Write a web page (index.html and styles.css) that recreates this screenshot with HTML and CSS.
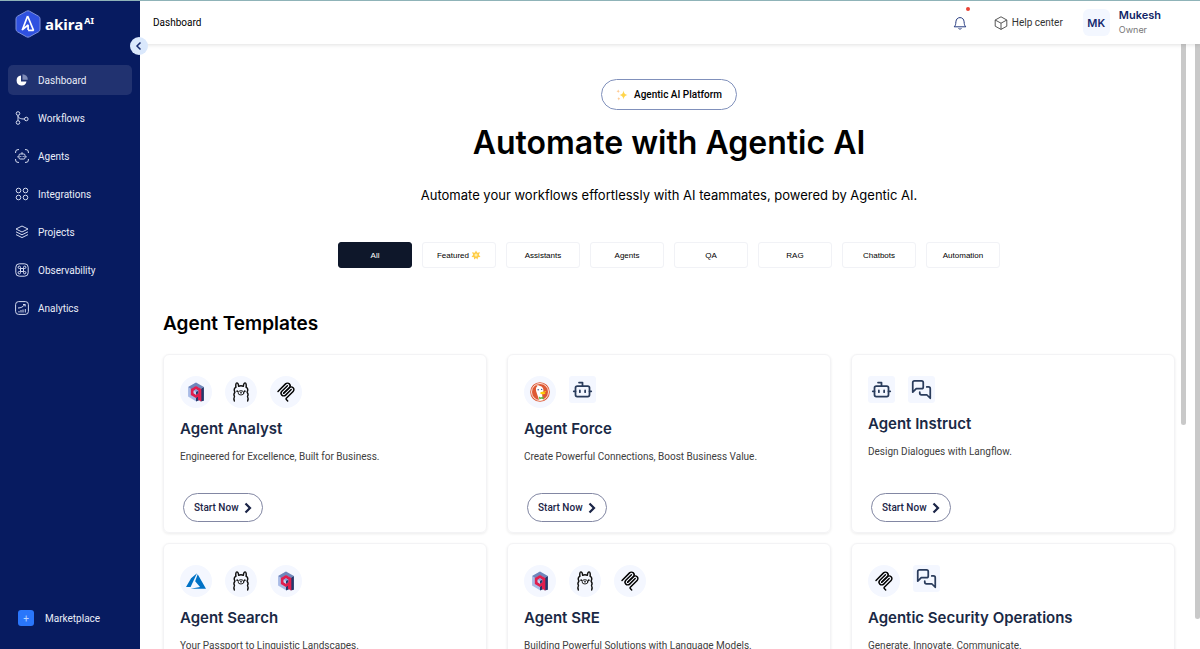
FILE: index.html
```html
<!DOCTYPE html>
<html lang="en">
<head>
<meta charset="utf-8">
<title>Akira AI – Dashboard</title>
<link rel="stylesheet" href="styles.css">
</head>
<body>
<svg class="sprite" aria-hidden="true">
  <symbol id="qdrant" viewBox="0 0 24 24">
    <path fill="#a9bbe6" d="M12 1 2.500 6.500v11L12 23l3-1.700V12z"/>
    <path fill="#6f86bb" d="M12 .500 2.500 6l4 2.400L12 5.200l5.500 3.200L21.500 6z"/>
    <path fill="#24386c" d="M21.500 6v16.500l-4 1V8.400zM12 18.500l4.500-2.500v5.500L12 23.500z"/>
    <path fill="#e01e4e" fill-rule="evenodd" d="M12 4.800 18.400 8.500V23.300l-4-2V17.800L12 19.200 5.800 15.600V8.400zM12 8.800 9.200 10.400v3.200L12 15.200l2.800-1.600v-3.200z"/>
    <path fill="#8aa2da" d="m12 8.800 2.800 1.600L12 12 9.200 10.400z"/>
    <path fill="#c5d2f2" d="M9.200 10.400v3.200L12 15.200V12z"/>
    <path fill="#24386c" d="M14.800 10.400v3.200L12 15.200V12z"/>
  </symbol>
  <symbol id="llama" viewBox="0 0 24 24">
    <g fill="none" stroke="#111" stroke-width="1.700" stroke-linecap="round" stroke-linejoin="round">
      <path d="M5.800 6.200C5.500 3.800 5.900 1 7 1s2 1.800 2.200 4.200M18.200 6.200C18.500 3.800 18.100 1 17 1s-2 1.800-2.200 4.200M9.200 5.200c1.700-.900 3.900-.900 5.600 0"/>
      <path d="M5.800 6.200C3.900 7.500 3.500 10 4.700 12.200c-1.400 1.500-1.500 3.400-.500 5.200-.900 1.600-.900 3.500-.200 5.400M18.200 6.200c1.900 1.300 2.300 3.800 1.100 6 1.400 1.500 1.500 3.400.500 5.200.900 1.600.900 3.500.200 5.400"/>
      <ellipse cx="12" cy="13" rx="3.500" ry="2.600" stroke-width="1.100"/>
      <path stroke-width="1" d="M11.300 12.300 12 12.800l.700-.500M12 12.800v.900"/>
    </g>
    <circle cx="7.400" cy="11" r="1"/><circle cx="16.600" cy="11" r="1"/>
  </symbol>
  <symbol id="mcp" viewBox="0 0 180 180">
    <g fill="none" stroke="#000" stroke-width="13" stroke-linecap="round">
      <path d="M18 84.850 85.880 16.970c9.370-9.370 24.570-9.370 33.940 0 9.370 9.370 9.370 24.570 0 33.940L68.560 102.180"/>
      <path d="M69.270 101.470 119.820 50.910c9.370-9.370 24.570-9.370 33.940 0l.350.350c9.370 9.370 9.370 24.570 0 33.940L92.720 146.600c-3.120 3.120-3.120 8.190 0 11.310l12.610 12.610"/>
      <path d="M102.850 33.940 52.650 84.150c-9.370 9.370-9.370 24.570 0 33.940 9.370 9.370 24.570 9.370 33.940 0L136.790 67.880"/>
    </g>
  </symbol>
  <symbol id="duck" viewBox="0 0 24 24">
    <circle cx="12" cy="12" r="11.800" fill="#de5833"/>
    <circle cx="12" cy="12" r="10.200" fill="none" stroke="#fff" stroke-width="1"/>
    <path fill="#fff" d="M10.800 21.600C10 18 8.200 14.500 7.400 11.200 6.800 8.400 7 6 9 5.200c-.800-.600-1.400-.500-1.800-.500 1.500-1 3.600-.900 4.800.200 2.900.600 4.300 2.800 4.100 5.700-.200 2-1.600 3.200-1.500 5 .100 2 .800 4 1.400 5.800a10 10 0 0 1-5.200.200z"/>
    <path fill="#fdd20a" d="M12.400 12.600c1.300-1.200 3-1 5-1.300 1-.200 1.900-.300 2 .100.200.900-2.200 1.300-3.400 1.600 1 .200 2.400-.100 2.500.500.100 1-3.900 1.600-5.200.900-.900-.500-1.400-1.200-.9-1.800z"/>
    <path fill="#65bc46" d="m10.600 17.300 2.500 1.200 2.800-1.400.500 3.600-2.600-.700-2.600 1z"/>
    <circle cx="9.800" cy="9.200" r=".9" fill="#2d4f8e"/><circle cx="14" cy="8.900" r=".8" fill="#2d4f8e"/>
  </symbol>
  <symbol id="azure" viewBox="0 0 24 24">
    <path fill="#0072c6" d="M5.483 21.300H24L14.025 4.013l-3.038 8.347 5.836 6.938zM13.230 2.700 6.105 8.677 0 19.253h5.505z"/>
  </symbol>
  <symbol id="bot" viewBox="0 0 24 24">
    <g fill="none" stroke="#2a3c5c" stroke-width="2" stroke-linecap="round" stroke-linejoin="round">
      <path d="M12 8V4H8M2 14h2M20 14h2M15 13v2M9 13v2"/><rect x="4" y="8" width="16" height="12" rx="2"/>
    </g>
  </symbol>
  <symbol id="chat" viewBox="0 0 24 24">
    <g fill="none" stroke="#2a3c5c" stroke-width="2" stroke-linecap="round" stroke-linejoin="round">
      <path d="M14 9a2 2 0 0 1-2 2H6l-4 4V4a2 2 0 0 1 2-2h8a2 2 0 0 1 2 2z"/><path d="M18 9h2a2 2 0 0 1 2 2v11l-4-4h-6a2 2 0 0 1-2-2v-1"/>
    </g>
  </symbol>
  <symbol id="chevron" viewBox="0 0 8 12">
    <path d="m1.500 1.500 4.500 4.500-4.500 4.500" fill="none" stroke="#1b2547" stroke-width="2.200"/>
  </symbol>
</svg>

<div class="app">
  <aside class="sidebar">
    <a class="brand" href="#">
      <svg class="brand-mark" viewBox="0 0 26 28" aria-hidden="true">
        <path d="M11.500 1.200q1.500-.800 3 0l9 5q1.500.900 1.500 2.600v10.400q0 1.700-1.500 2.600l-9 5q-1.500.800-3 0l-9-5Q1 20.900 1 19.200V8.800q0-1.700 1.500-2.600z" fill="#2f51e0" stroke="#7f92dc" stroke-width="1"/>
        <path d="M12.600 6 7.200 20.300M12.600 6l5.900 14.300h-5.400M7.500 19.600l5.600-4.600v5" fill="none" stroke="#fff" stroke-width="1.700" stroke-linejoin="bevel"/>
      </svg>
      <span class="brand-name">akira<sup>AI</sup></span>
    </a>
    <nav class="nav">
      <a class="nav-item active" href="#">
        <svg viewBox="0 0 14 14"><path d="M6 2.500a5 5 0 1 0 5.500 6H6z" fill="#fff"/><path d="M7.500 1.200v5.600h5.300a5.300 5.300 0 0 0-5.300-5.600z" fill="#7e8ab5"/></svg>Dashboard</a>
      <a class="nav-item" href="#">
        <svg viewBox="0 0 14 14"><circle cx="3" cy="2.500" r="1.800"/><circle cx="3" cy="11.500" r="1.800"/><circle cx="11.300" cy="8" r="1.800"/><path d="M3 4.300v5.400M3 5c.5 2 2 3 6.500 3"/></svg>Workflows</a>
      <a class="nav-item" href="#">
        <svg viewBox="0 0 14 14"><path d="M.6 4V3A2.400 2.400 0 0 1 3 .6h1M10 .6h1A2.400 2.400 0 0 1 13.400 3v1M13.400 10v1a2.400 2.400 0 0 1-2.400 2.400h-1M4 13.400H3A2.400 2.400 0 0 1 .6 11v-1"/><rect x="4" y="5" width="6" height="5" rx="1.200"/><path d="M7 5V3.200M3 7v1.500M11 7v1.500M5.800 7v1M8.200 7v1"/></svg>Agents</a>
      <a class="nav-item" href="#">
        <svg viewBox="0 0 14 14"><circle cx="3.500" cy="3.500" r="2.300"/><circle cx="10.500" cy="3.500" r="2.300"/><circle cx="3.500" cy="10.500" r="2.300"/><circle cx="10.500" cy="10.500" r="2.300"/></svg>Integrations</a>
      <a class="nav-item" href="#">
        <svg viewBox="0 0 14 14"><path d="M7 1 13 4 7 7 1 4zM1 6.800l6 3 6-3M1 9.600l6 3 6-3"/></svg>Projects</a>
      <a class="nav-item" href="#">
        <svg viewBox="0 0 14 14"><rect x=".8" y=".8" width="12.400" height="12.400" rx="3.500"/><path d="M5.500 5.500h3v3h-3zM5.500 5.500H4.300a1.200 1.200 0 1 1 1.200-1.200zM8.500 5.500V4.300a1.200 1.200 0 1 1 1.200 1.200zM8.500 8.500h1.200a1.200 1.200 0 1 1-1.200 1.200zM5.500 8.500v1.200a1.200 1.200 0 1 1-1.200-1.200z"/></svg>Observability</a>
      <a class="nav-item" href="#">
        <svg viewBox="0 0 14 14"><rect x=".6" y=".6" width="12.800" height="12.800" rx="3"/><path d="M3 7c3 0 5-1.200 7-3.500M8 3.500h2.200v2M4 11.500V10M6 11.500V9M8 11.500v-3M10.300 11.500V8"/></svg>Analytics</a>
    </nav>
    <a class="market" href="#"><span class="market-icon">+</span>Marketplace</a>
    <button class="collapse" type="button" aria-label="Collapse sidebar">
      <svg viewBox="0 0 10 10"><path d="M6.500 1.500 3 5l3.500 3.500" fill="none" stroke="#15296e" stroke-width="1.500"/></svg>
    </button>
  </aside>

  <div class="page">
    <header class="topbar">
      <span class="crumb">Dashboard</span>
      <button class="bell" type="button" aria-label="Notifications">
        <svg viewBox="0 0 14 14"><path d="M1.200 10.800h11.600c-1.400-1.300-1.500-2.600-1.700-5C10.900 3.200 9.300 1.600 7 1.600S3.100 3.200 2.900 5.800c-.200 2.400-.300 3.700-1.700 5zM5.500 12.500c.8.700 2.200.7 3 0" fill="none" stroke="#24397f" stroke-width="1"/></svg>
        <span class="dot"></span>
      </button>
      <a class="help" href="#">
        <svg viewBox="0 0 14 14"><path d="M7 .8 12.800 4v6.200L7 13.400 1.200 10.200V4zM1.200 4 7 7.200 12.800 4M7 7.200v6.200" fill="none" stroke="#444" stroke-width=".9" stroke-linejoin="round"/></svg>Help center</a>
      <div class="user">
        <span class="avatar">MK</span>
        <div class="who"><strong>Mukesh</strong><span>Owner</span></div>
      </div>
    </header>

    <main class="content">
      <section class="hero">
        <div class="pill">
          <svg viewBox="0 0 12 12"><path d="M7.500 1.500q.4 4 4 4.500-3.600.500-4 4.500-.4-4-4-4.500 3.600-.500 4-4.500z" fill="#ffd54a"/><path d="M2.200.5q.2 1.500 1.700 1.700-1.500.200-1.700 1.700Q2 2.400.5 2.200 2 2 2.200.5zM2.800 8q.2 1.500 1.500 1.700-1.300.200-1.500 1.700-.2-1.500-1.500-1.700Q2.600 9.500 2.800 8z" fill="#ffc68a"/></svg>
          Agentic AI Platform</div>
        <h1>Automate with Agentic AI</h1>
        <p>Automate your workflows effortlessly with AI teammates, powered by Agentic AI.</p>
      </section>

      <div class="tabs">
        <button class="tab selected" type="button">All</button>
        <button class="tab" type="button">Featured
          <svg viewBox="0 0 10 10"><path d="m5 .5 1.200 2.200 2.800-.5-1.200 2.500L9.500 7l-2.500.2L6.500 9.500 5 8 3 9.500 3 7.200.5 7 2.200 4.700 1 2.200l2.800.5z" fill="#ffcb45"/><circle cx="5" cy="5" r="1.500" fill="#fff0a8"/></svg></button>
        <button class="tab" type="button">Assistants</button>
        <button class="tab" type="button">Agents</button>
        <button class="tab" type="button">QA</button>
        <button class="tab" type="button">RAG</button>
        <button class="tab" type="button">Chatbots</button>
        <button class="tab" type="button">Automation</button>
      </div>

      <h2>Agent Templates</h2>
      <div class="cards">
        <article class="card">
          <div class="icons"><span class="round"><svg><use href="#qdrant"/></svg></span><span class="round"><svg><use href="#llama"/></svg></span><span class="round"><svg><use href="#mcp"/></svg></span></div>
          <h3>Agent Analyst</h3>
          <p>Engineered for Excellence, Built for Business.</p>
          <button class="start" type="button">Start Now <svg><use href="#chevron"/></svg></button>
        </article>
        <article class="card">
          <div class="icons"><span class="round"><svg><use href="#duck"/></svg></span><span class="square"><svg><use href="#bot"/></svg></span></div>
          <h3>Agent Force</h3>
          <p>Create Powerful Connections, Boost Business Value.</p>
          <button class="start" type="button">Start Now <svg><use href="#chevron"/></svg></button>
        </article>
        <article class="card">
          <div class="icons"><span class="square"><svg><use href="#bot"/></svg></span><span class="square"><svg><use href="#chat"/></svg></span></div>
          <h3>Agent Instruct</h3>
          <p>Design Dialogues with Langflow.</p>
          <button class="start" type="button">Start Now <svg><use href="#chevron"/></svg></button>
        </article>
        <article class="card">
          <div class="icons"><span class="round"><svg><use href="#azure"/></svg></span><span class="round"><svg><use href="#llama"/></svg></span><span class="round"><svg><use href="#qdrant"/></svg></span></div>
          <h3>Agent Search</h3>
          <p>Your Passport to Linguistic Landscapes.</p>
          <button class="start" type="button">Start Now <svg><use href="#chevron"/></svg></button>
        </article>
        <article class="card">
          <div class="icons"><span class="round"><svg><use href="#qdrant"/></svg></span><span class="round"><svg><use href="#llama"/></svg></span><span class="round"><svg><use href="#mcp"/></svg></span></div>
          <h3>Agent SRE</h3>
          <p>Building Powerful Solutions with Language Models.</p>
          <button class="start" type="button">Start Now <svg><use href="#chevron"/></svg></button>
        </article>
        <article class="card">
          <div class="icons"><span class="round"><svg><use href="#mcp"/></svg></span><span class="square"><svg><use href="#chat"/></svg></span></div>
          <h3>Agentic Security Operations</h3>
          <p>Generate. Innovate. Communicate.</p>
          <button class="start" type="button">Start Now <svg><use href="#chevron"/></svg></button>
        </article>
      </div>
      <span class="thumb inner"></span>
      <span class="thumb outer"></span>
    </main>
  </div>
</div>
</body>
</html>
```

FILE: styles.css
```css
* { box-sizing: border-box; }
body { margin: 0; font-family: Inter, "Liberation Sans", sans-serif; color: #000; background: #fff; }
a { color: inherit; text-decoration: none; }
button { font: inherit; color: inherit; padding: 0; cursor: pointer; }
h1, h2, h3, p { margin: 0; }
svg { flex: none; display: block; }
.sprite { position: absolute; width: 0; height: 0; }

.app { display: flex; height: 100vh; overflow: hidden; border-top: 1px solid #8fb3b8; }

.nav-item, .market, .crumb, .help, .pill, .card p, .start { font-family: Roboto, Inter, sans-serif; font-size: 10px; }

/* Sidebar */
.sidebar { position: relative; z-index: 2; flex: none; width: 140px; display: flex; flex-direction: column; padding: 9px 8px 23px; background: #071b60; color: #e9edf8; }
.brand { display: flex; align-items: center; gap: 4px; padding-left: 7px; }
.brand-mark { width: 26px; height: 28px; }
.brand-name { font: 700 15px/28px "Noto Sans", "Open Sans", sans-serif; color: #fff; }
.brand-name sup { font-size: 9px; line-height: 1; margin-left: 1px; }
.nav { display: flex; flex-direction: column; gap: 8px; margin-top: 27px; }
.nav-item { display: flex; align-items: center; gap: 9px; height: 30px; padding-left: 7px; border-radius: 5px; }
.nav-item svg { width: 14px; height: 14px; fill: none; stroke: #d6dcf0; stroke-width: 1; }
.nav-item.active { background: #213270; }
.nav-item.active svg { stroke: none; }
.market { display: flex; align-items: center; gap: 11px; margin-top: auto; padding-left: 10px; }
.market-icon { display: grid; place-items: center; width: 16px; height: 16px; border-radius: 3px; background: #2a76fb; color: #b9d4ff; }
.collapse { position: absolute; top: 36px; right: -8px; width: 18px; height: 18px; display: grid; place-items: center; border: 0; border-radius: 50%; background: #dae8fc; }
.collapse svg { width: 10px; height: 10px; }

/* Top bar */
.page { flex: 1; min-width: 0; display: flex; flex-direction: column; }
.topbar { position: relative; z-index: 1; flex: none; display: flex; align-items: center; height: 43px; padding: 0 39px 0 13px; box-shadow: 0 1px 4px rgba(0, 0, 0, .12); background: #fff; }
.crumb { margin-right: auto; }
.bell { position: relative; border: 0; background: none; }
.bell svg { width: 14px; height: 14px; }
.dot { position: absolute; top: -9px; right: -3px; width: 4px; height: 4px; border-radius: 50%; background: #ea4335; }
.help { display: flex; align-items: center; gap: 4px; margin-left: 27px; color: #333; }
.help svg { width: 14px; height: 14px; }
.user { display: flex; align-items: center; gap: 9px; margin-left: 20px; }
.avatar { display: grid; place-items: center; width: 27px; height: 27px; border-radius: 6px; background: #f3f7ff; color: #15296e; font-size: 11px; font-weight: 600; }
.who { display: flex; flex-direction: column; gap: 1px; font-size: 9px; line-height: 14px; color: #777; }
.who strong { font-size: 11px; font-weight: 600; color: #101f66; }

/* Content */
.content { position: relative; flex: 1; min-height: 0; overflow: hidden; padding: 35px 25px 24px 23px; }
.hero { display: flex; flex-direction: column; align-items: center; text-align: center; }
.pill { display: flex; align-items: center; gap: 6px; height: 31px; padding: 0 14px; border: 1px solid #8090bb; border-radius: 16px; font-weight: 500; }
.pill svg { width: 12px; height: 12px; }
.hero h1 { margin-top: 10px; font-size: 32px; line-height: 46px; font-weight: 600; }
.hero p { margin-top: 19px; font-size: 13px; line-height: 20px; }
.tabs { display: flex; justify-content: center; gap: 10px; margin-top: 37px; }
.tab { display: flex; align-items: center; justify-content: center; gap: 2px; width: 74px; height: 26px; border: 1px solid #f1f2f6; border-radius: 3px; background: #fff; font-family: "Liberation Sans", Arial, sans-serif; font-size: 8px; }
.tab svg { width: 10px; height: 10px; }
.tab.selected { background: #0e172a; border-color: #0e172a; color: #fff; }
.content h2 { margin-top: 43px; font-size: 19px; line-height: 26px; font-weight: 600; }
.cards { display: grid; grid-template-columns: repeat(3, 1fr); gap: 10px 20px; margin-top: 17px; }
.card { display: flex; flex-direction: column; align-items: flex-start; height: 179px; padding: 21px 16px 10px; border: 1px solid #f3f3f5; border-radius: 6px; box-shadow: 0 1px 3px rgba(0, 0, 0, .08); }
.icons { display: flex; align-items: flex-start; gap: 13px; }
.round, .square { display: grid; place-items: center; background: #f4f7ff; }
.round { width: 32px; height: 32px; border-radius: 50%; }
.round svg { width: 20px; height: 20px; }
.square { width: 27px; height: 27px; border-radius: 3px; }
.square svg { width: 21px; height: 21px; }
.card h3 { margin-top: 10px; font-size: 15px; line-height: 22px; font-weight: 600; color: #1a2945; }
.card p { margin-top: 10px; line-height: 14px; color: #404040; }
.start { display: flex; align-items: center; gap: 5px; height: 29px; margin: auto 0 0 3px; padding: 0 10px; border: 1px solid #8287a3; border-radius: 15px; background: #fff; color: #1b2547; font-weight: 500; }
.start svg { width: 8px; height: 12px; }

/* Scroll thumbs */
.thumb { position: absolute; top: 0; width: 5px; border-radius: 0 0 3px 3px; background: #c9c9c9; }
.inner { right: 14px; height: 63%; }
.outer { right: 0; height: 95%; }
```
